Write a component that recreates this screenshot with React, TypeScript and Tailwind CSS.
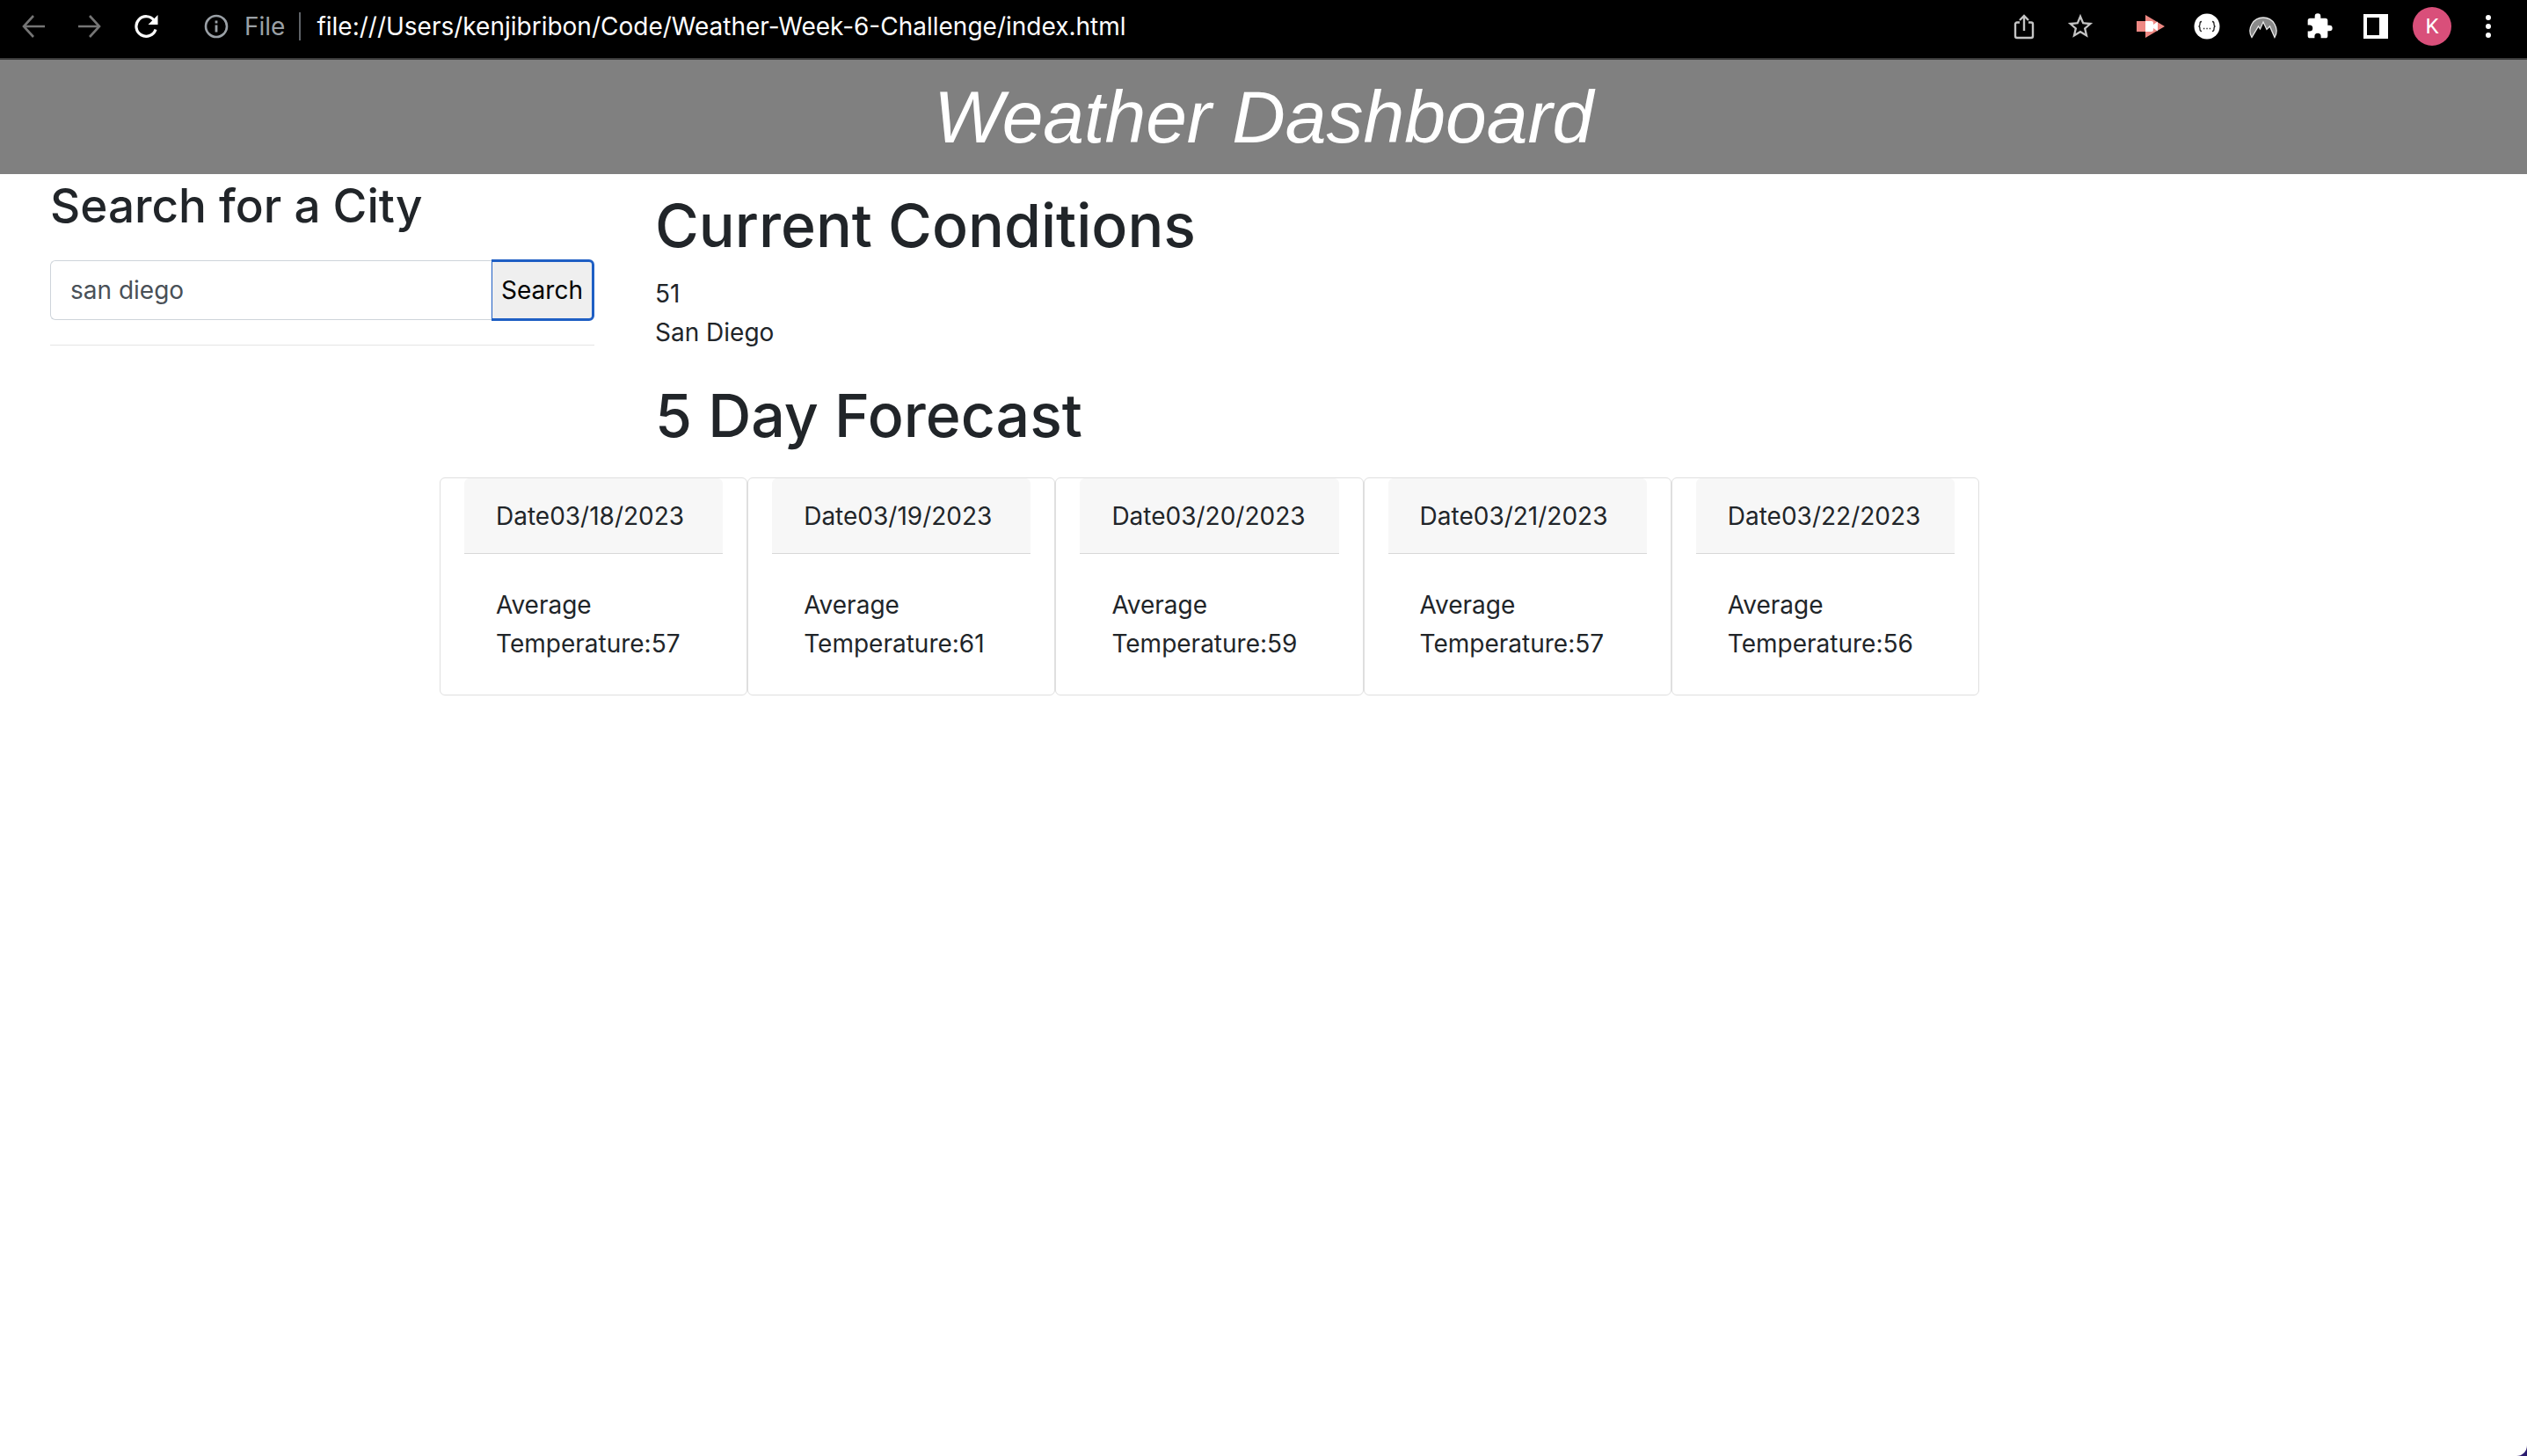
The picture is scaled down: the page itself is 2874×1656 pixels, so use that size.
import React from "react";
import type { ReactNode } from "react";

const forecast = [
  { date: "03/18/2023", temperature: 57 },
  { date: "03/19/2023", temperature: 61 },
  { date: "03/20/2023", temperature: 59 },
  { date: "03/21/2023", temperature: 57 },
  { date: "03/22/2023", temperature: 56 },
];

function ToolButton({ label, className = "", children }: { label: string; className?: string; children: ReactNode }) {
  return (
    <button type="button" aria-label={label} className={`flex h-12 w-16 items-center justify-center ${className}`}>
      {children}
    </button>
  );
}

function BrowserBar() {
  return (
    <nav aria-label="Browser toolbar" className="flex h-[68px] items-center border-b-2 border-[#3c3c3c] bg-black pr-3 pb-1.5 pl-1.5">
      <ToolButton label="Back">
        <svg width="26" height="26" viewBox="0 0 26 26" fill="none" stroke="#757575" strokeWidth="2.6">
          <path d="M26 13H2M13 1L2 13l11 12" />
        </svg>
      </ToolButton>
      <ToolButton label="Forward">
        <svg width="26" height="26" viewBox="0 0 26 26" fill="none" stroke="#757575" strokeWidth="2.6">
          <path d="M0 13h24M13 1l11 12-11 12" />
        </svg>
      </ToolButton>
      <ToolButton label="Reload">
        <svg width="28" height="28" viewBox="0 0 28 28" fill="none">
          <path d="M23.5 7.5A11.3 11.3 0 1 0 25 17.5" stroke="#fff" strokeWidth="3.2" />
          <path d="M27.5 1v11h-11z" fill="#fff" />
        </svg>
      </ToolButton>
      <svg className="ml-8" width="32" height="32" viewBox="0 0 32 32" fill="none" stroke="#9aa0a6">
        <circle cx="16" cy="16" r="12" strokeWidth="2.6" />
        <path d="M16 14.5v8M16 9.5v3" strokeWidth="2.8" />
      </svg>
      <span className="ml-4 text-[28px] leading-8 text-[#9aa0a6]">File</span>
      <span className="ml-4 h-8 w-0.5 bg-[#5f6368]" />
      <span className="ml-[18px] text-[28px] leading-8 text-white">
        file:///Users/kenjibribon/Code/Weather-Week-6-Challenge/index.html
      </span>
      <div className="ml-auto flex">
        <ToolButton label="Share">
          <svg width="24" height="30" viewBox="0 0 24 30" fill="none" stroke="#c4c4c4" strokeWidth="2.4">
            <path d="M7 10.500H4a2 2 0 0 0-2 2V26a2 2 0 0 0 2 2h16a2 2 0 0 0 2-2V12.500a2 2 0 0 0-2-2h-3M12 20V3M7 8l5-5 5 5" />
          </svg>
        </ToolButton>
        <ToolButton label="Bookmark" className="mr-4">
          <svg width="34" height="34" viewBox="0 0 24 24" fill="#c4c4c4">
            <path d="M22 9.240l-7.190-.620L12 2 9.190 8.630 2 9.240l5.460 4.730L5.820 21 12 17.270 18.180 21l-1.630-7.030L22 9.240zM12 15.400l-3.760 2.270 1-4.280-3.320-2.880 4.380-.380L12 6.100l1.710 4.040 4.380.380-3.320 2.880 1 4.280L12 15.400z" />
          </svg>
        </ToolButton>
        <ToolButton label="Screen recorder">
          <svg width="32" height="26" viewBox="0 0 32 26">
            <path d="M0 7h10V0l22 13-22 13v-7H0z" fill="#ee8883" />
            <path d="M10 7h7a2 2 0 0 1 2 2v2l5-3.500v11L19 15v2a2 2 0 0 1-2 2h-7z" fill="#fff" />
          </svg>
        </ToolButton>
        <ToolButton label="JSON viewer">
          <svg width="30" height="30" viewBox="0 0 30 30" fill="none">
            <circle cx="15" cy="15" r="14.500" fill="#fff" />
            <path d="M9 9.500c-2 0-2 1-2 2.500s0 3-1.500 3c1.500 0 1.500 1.500 1.500 3s0 2.500 2 2.500M21 9.500c2 0 2 1 2 2.500s0 3 1.500 3c-1.500 0-1.500 1.500-1.500 3s0 2.500-2 2.500" stroke="#222" strokeWidth="1.300" />
            <path d="M11 17.500h1.300M14.400 17.500h1.300M17.800 17.500h1.300" stroke="#222" strokeWidth="1.300" />
          </svg>
        </ToolButton>
        <ToolButton label="VPN">
          <svg width="32" height="28" viewBox="0 0 32 28">
            <path d="M3 26.500A15 15 0 1 1 29 26.500L23.500 14 20 17.500 16 9l-3.500 8-2-3z" fill="#8a8a8a" stroke="#e8e8e8" strokeWidth="1.300" />
          </svg>
        </ToolButton>
        <ToolButton label="Extensions">
          <svg width="32" height="32" viewBox="0 0 24 24" fill="#fff">
            <path d="M20.500 11H19V7a2 2 0 0 0-2-2h-4V3.500a2.500 2.500 0 0 0-5 0V5H4a2 2 0 0 0-2 2v3.800h1.500a2.700 2.700 0 0 1 0 5.400H2V20a2 2 0 0 0 2 2h3.800v-1.500a2.700 2.700 0 0 1 5.400 0V22H17a2 2 0 0 0 2-2v-4h1.500a2.500 2.500 0 0 0 0-5z" />
          </svg>
        </ToolButton>
        <ToolButton label="Side panel">
          <svg width="28" height="28" viewBox="0 0 28 28">
            <path d="M0 0h28v28H0zM4 4v20h14V4z" fill="#fff" fillRule="evenodd" />
          </svg>
        </ToolButton>
        <ToolButton label="Profile">
          <span className="flex size-11 items-center justify-center rounded-full bg-[#d94f7a] font-['Roboto',sans-serif] text-2xl text-white">K</span>
        </ToolButton>
        <ToolButton label="Menu">
          <svg width="6" height="26" viewBox="0 0 6 26" fill="#fff">
            <circle cx="3" cy="3" r="3" />
            <circle cx="3" cy="13" r="3" />
            <circle cx="3" cy="23" r="3" />
          </svg>
        </ToolButton>
      </div>
    </nav>
  );
}

export default function App() {
  return (
    <div className="flex min-h-screen flex-col bg-[#2a1a6e] font-['Inter',sans-serif] text-[28px] leading-[44px] text-[#212529]">
      <BrowserBar />
      <header className="bg-[#808080] py-2.5 text-center">
        <h1 className="font-['Liberation_Sans',sans-serif] text-[84px] leading-[110px] font-normal text-white italic">
          Weather Dashboard
        </h1>
      </header>
      <main className="flex-1 rounded-br-xl bg-white">
        <div className="flex gap-[69px] pl-[57px]">
          <aside className="w-[619px] pt-1">
            <h2 className="text-[53px] leading-16 font-medium">
              <label htmlFor="city">Search for a City</label>
            </h2>
            <form className="mt-[30px] flex h-[68px]" onSubmit={(e) => e.preventDefault()}>
              <input
                id="city"
                type="text"
                defaultValue="san diego"
                className="min-w-0 flex-1 rounded-l-[6px] border border-r-0 border-[#ced4da] px-[22px] text-[#495057] outline-none"
              />
              <button
                type="submit"
                className="-my-px w-[117px] rounded-r-[6px] border-[3px] border-l border-[#1f5fc4] bg-[#efefef] text-black"
              >
                Search
              </button>
            </form>
            <hr className="mt-7 border-[#e5e5e5]" />
          </aside>
          <section className="flex-1 pt-3.5">
            <h2 className="text-[68px] leading-[88px] font-medium">Current Conditions</h2>
            <div className="mt-3">
              <p>51</p>
              <p>San Diego</p>
            </div>
            <h2 className="mt-7 text-[68px] leading-[88px] font-medium">5 Day Forecast</h2>
          </section>
        </div>
        <div className="mt-[27px] mr-[623px] ml-[500px] grid grid-cols-5">
          {forecast.map(({ date, temperature }) => (
            <article key={date} className="rounded-[6px] border border-[#dfdfdf] px-[27px]">
              <h3 className="rounded-t-[6px] border-b border-[#d8d8d8] bg-[#f7f7f7] px-9 pt-[21px] pb-5">Date{date}</h3>
              <p className="p-9">Average Temperature:{temperature}</p>
            </article>
          ))}
        </div>
      </main>
    </div>
  );
}
